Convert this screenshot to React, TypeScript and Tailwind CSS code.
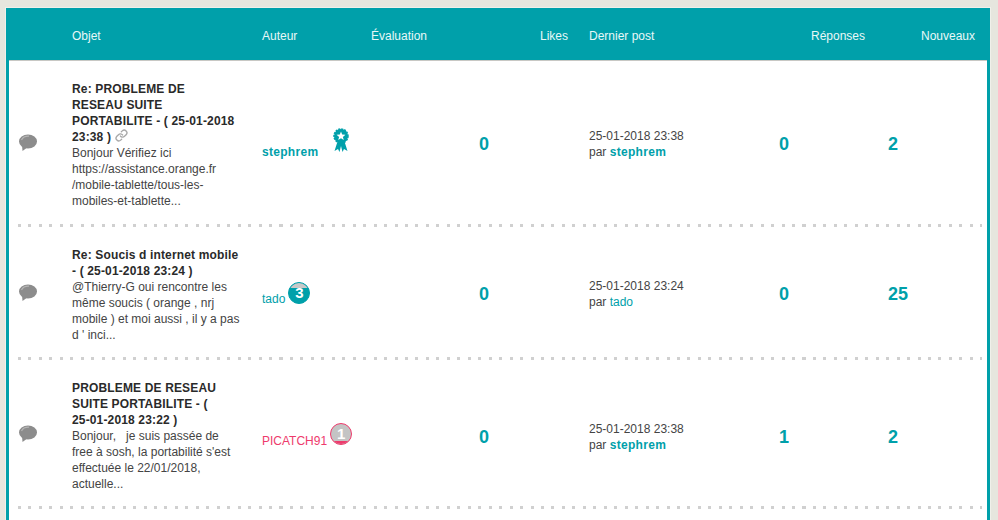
import { Link } from "lucide-react"

const teal = "text-[#00a0aa]"

type Row = {
    title: React.ReactNode
    excerpt: React.ReactNode
    author: React.ReactNode
    lastDate: string
    lastBy: React.ReactNode
    replies: string
    news: string
    height: string
    statPad: string
}

const Bubble = () => (
    <svg width="20" height="18" viewBox="0 0 20 18">
        <ellipse cx="10" cy="7.5" rx="9" ry="7" fill="#8c8c8c" />
        <path d="M4 11 L4.5 17 L10 13 Z" fill="#8c8c8c" />
        <path d="M3.5 6 C5 3 8 2 11 2.2" stroke="#b5b5b5" strokeWidth="1.2" fill="none" />
    </svg>
)

const Ribbon = () => (
    <svg width="18" height="25" viewBox="0 0 18 25">
        <path d="M6 12 L2.5 23 L6 21 L7.5 24 L9 18 L10.5 24 L12 21 L15.5 23 L12 12 Z" fill="#00a0aa" />
        <circle cx="9" cy="8" r="7" fill="#00a0aa" stroke="#00a0aa" strokeWidth="1.5" strokeDasharray="2 1" />
        <path d="M9 3.5 L10.2 6.6 L13.4 6.8 L10.9 8.9 L11.8 12 L9 10.3 L6.2 12 L7.1 8.9 L4.6 6.8 L7.8 6.6 Z" fill="#fff" />
    </svg>
)

const Rank = (props: { n: string, ring: string, cap: string, fill: string, capTop?: boolean }) => (
    <span className="relative inline-flex items-center justify-center w-[22px] h-[22px] rounded-full overflow-hidden font-bold text-[15px] text-white" style={{ backgroundColor: props.fill, border: `1px solid ${props.ring}` }}>
        <span className="absolute left-0 right-0" style={{ backgroundColor: props.cap, height: props.capTop ? 5 : 3, top: props.capTop ? 0 : undefined, bottom: props.capTop ? undefined : 0 }}></span>
        <span className="relative">{props.n}</span>
    </span>
)

const rows: Row[] = [
    {
        title: <>Re: PROBLEME DE<br />RESEAU SUITE<br />PORTABILITE - ( 25-01-2018<br />23:38 ) <Link className="inline -mt-1 text-[#a8a8a8]" size={13} strokeWidth={2.5} /></>,
        excerpt: <>Bonjour Vérifiez ici<br />https://assistance.orange.fr<br />/mobile-tablette/tous-les-<br />mobiles-et-tablette...</>,
        author: <div className="flex items-start gap-[14px]">
            <span className={`font-bold tracking-[0.3px] ${teal} mt-[16px]`}>stephrem</span>
            <Ribbon />
        </div>,
        lastDate: "25-01-2018 23:38",
        lastBy: <span className={`font-bold tracking-[0.3px] ${teal}`}>stephrem</span>,
        replies: "0",
        news: "2",
        height: "h-[166px]",
        statPad: "-mt-[1px]",
    },
    {
        title: <>Re: Soucis d internet mobile<br />- ( 25-01-2018 23:24 )</>,
        excerpt: <>@Thierry-G oui rencontre les<br />même soucis ( orange , nrj<br />mobile ) et moi aussi , il y a pas<br />d ' inci...</>,
        author: <div className="flex items-center gap-[3px] -mt-[2px]">
            <span className={`${teal} mt-[12px]`}>tado</span>
            <Rank n="3" ring="#00a0aa" cap="#c8c8c8" fill="#00a0aa" capTop />
        </div>,
        lastDate: "25-01-2018 23:24",
        lastBy: <span className={teal}>tado</span>,
        replies: "0",
        news: "25",
        height: "h-[133px]",
        statPad: "pt-[1px]",
    },
    {
        title: <>PROBLEME DE RESEAU<br />SUITE PORTABILITE - (<br />25-01-2018 23:22 )</>,
        excerpt: <>Bonjour, &nbsp; je suis passée de<br />free à sosh, la portabilité s'est<br />effectuée le 22/01/2018,<br />actuelle...</>,
        author: <div className="flex items-center gap-[3px] -mt-[2px]">
            <span className={`text-[#ee3a6c] mt-[14px]`}>PICATCH91</span>
            <Rank n="1" ring="#ee3a6c" cap="#ee3a6c" fill="#c4c4c4" />
        </div>,
        lastDate: "25-01-2018 23:38",
        lastBy: <span className={`font-bold tracking-[0.3px] ${teal}`}>stephrem</span>,
        replies: "1",
        news: "2",
        height: "h-[149px]",
        statPad: "pt-[5px]",
    },
]

export default function App() {
    return (
        <div className="h-[520px] overflow-hidden bg-[#e6e6de] pt-2 pl-[6px] pr-2 font-['Liberation_Sans',Arial,sans-serif] text-xs leading-4 text-[#444]">
            <div className="bg-[#00a0aa] border-x-[3px] border-[#00a0aa] shadow-[0_0_0_1px_#f0f0ea]">
                <div className="h-[52px] pt-[3px] flex items-center text-[#e8f8f8] text-xs">
                    <div className="w-[63px]"></div>
                    <div className="w-[190px]">Objet</div>
                    <div className="w-[109px]">Auteur</div>
                    <div className="w-[197px] flex justify-between">
                        <span>Évaluation</span>
                        <span>Likes</span>
                    </div>
                    <div className="w-[21px]"></div>
                    <div className="w-[222px]">Dernier post</div>
                    <div className="w-[110px]">Réponses</div>
                    <div>Nouveaux</div>
                </div>
                <div className="bg-white border-t border-[#c8c8c4]">
                    {rows.map((row, i) => (
                        <div key={i} className={`${row.height} grid grid-cols-[63px_190px_109px_218px_190px_109px_1fr] items-center relative`}>
                            <div className="pl-[9px] -mt-[2px]"><Bubble /></div>
                            <div className="pt-[2px]">
                                <div className="font-bold tracking-[0.15px] text-[#2a2a2a]">{row.title}</div>
                                <div>{row.excerpt}</div>
                            </div>
                            <div>{row.author}</div>
                            <div className={`pl-[108px] ${row.statPad} font-bold text-lg ${teal}`}>0</div>
                            <div className={row.statPad}>
                                <div>{row.lastDate}</div>
                                <div>par {row.lastBy}</div>
                            </div>
                            <div className={`${row.statPad} font-bold text-lg ${teal}`}>{row.replies}</div>
                            <div className={`${row.statPad} font-bold text-lg ${teal}`}>{row.news}</div>
                            <div className="absolute left-[9px] right-[5px] bottom-0 h-[3px] bg-[repeating-linear-gradient(90deg,#d0d0d0_0,#d0d0d0_3px,transparent_3px,transparent_10.46px)]"></div>
                        </div>
                    ))}
                    <div className="h-[20px]"></div>
                </div>
            </div>
        </div>
    )
}
